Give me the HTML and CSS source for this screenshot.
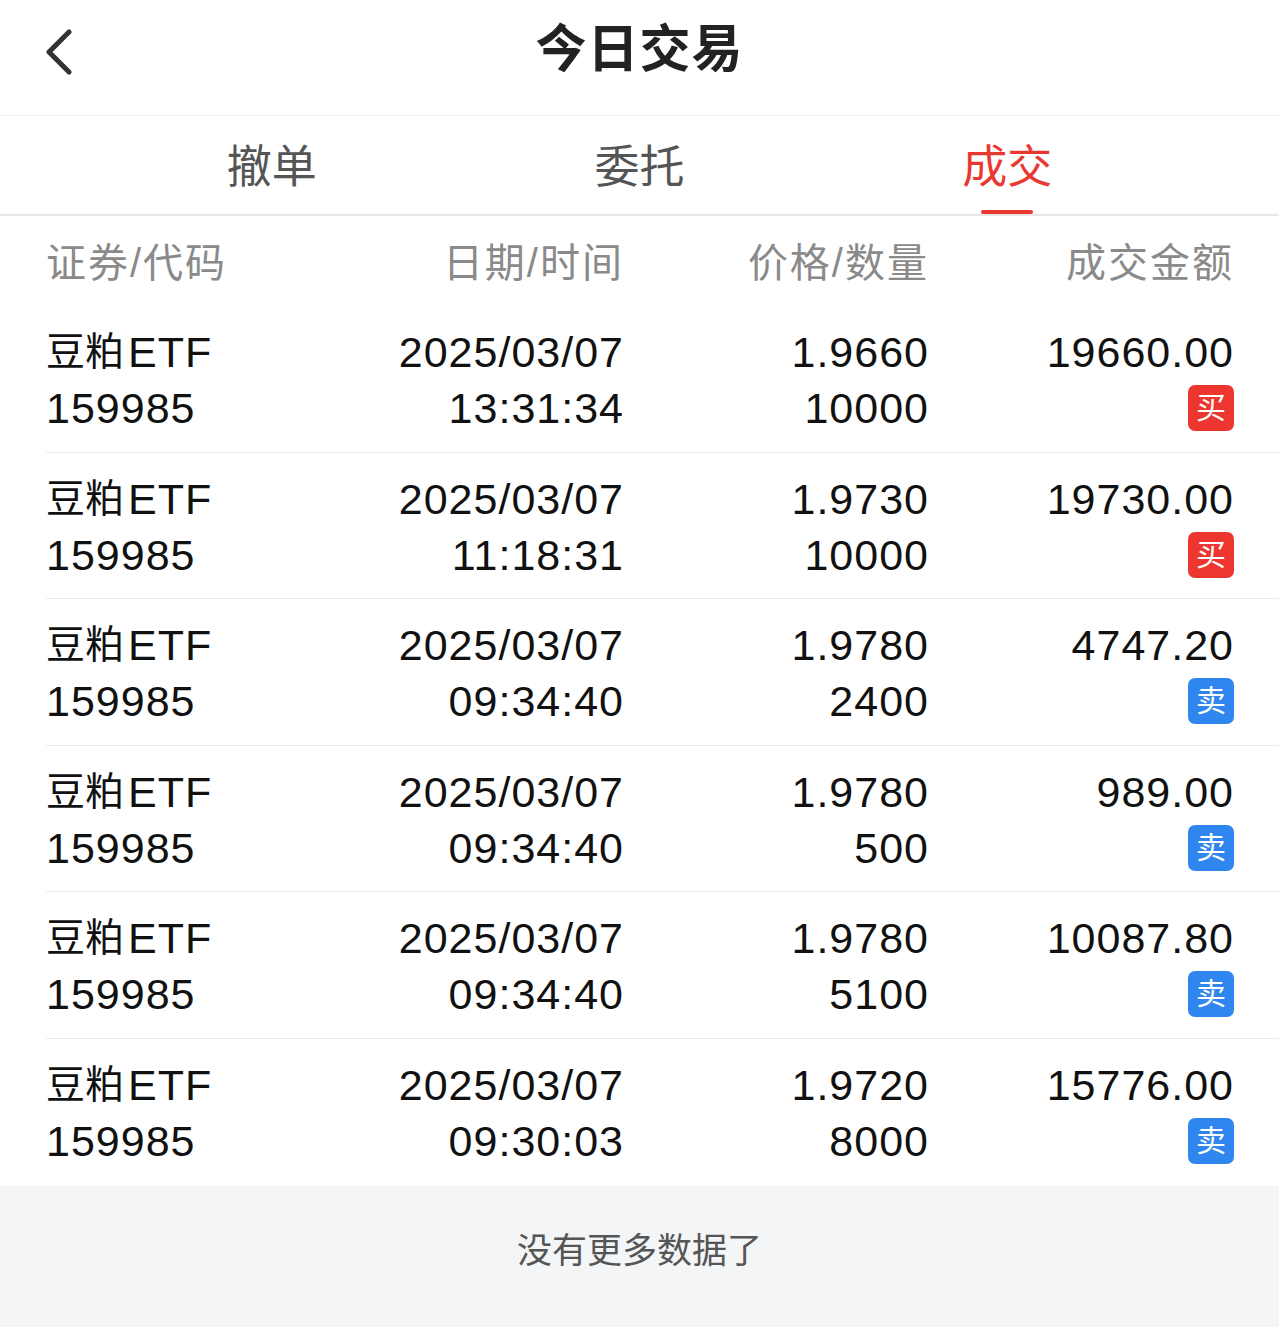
FILE: index.html
```html
<!DOCTYPE html>
<html lang="zh-CN">
<head>
    <meta charset="UTF-8">
    <meta name="viewport" content="width=device-width, initial-scale=1.0">
    <title>今日交易</title>
    <link rel="stylesheet" href="styles.css">
</head>
<body>
    <div class="page">
        <div class="header">
            <span class="back">
                <svg width="34" height="48" viewBox="0 0 34 48">
                    <polyline points="27,5 7,25 27,45" fill="none" stroke="#333" stroke-width="5" stroke-linecap="round" stroke-linejoin="round"/>
                </svg>
            </span>
            <h1 class="title">今日交易</h1>
        </div>

        <div class="tabs">
            <div class="tab">撤单</div>
            <div class="tab">委托</div>
            <div class="tab active">成交</div>
        </div>

        <div class="list">
            <div class="row head">
                <div class="cell left">证券/代码</div>
                <div class="cell">日期/时间</div>
                <div class="cell">价格/数量</div>
                <div class="cell">成交金额</div>
            </div>

            <div class="row">
                <div class="cell left"><span><b class="cn">豆粕</b>ETF</span><span>159985</span></div>
                <div class="cell"><span>2025/03/07</span><span>13:31:34</span></div>
                <div class="cell"><span>1.9660</span><span>10000</span></div>
                <div class="cell"><span>19660.00</span><span><i class="badge buy">买</i></span></div>
            </div>
            <div class="row">
                <div class="cell left"><span><b class="cn">豆粕</b>ETF</span><span>159985</span></div>
                <div class="cell"><span>2025/03/07</span><span>11:18:31</span></div>
                <div class="cell"><span>1.9730</span><span>10000</span></div>
                <div class="cell"><span>19730.00</span><span><i class="badge buy">买</i></span></div>
            </div>
            <div class="row">
                <div class="cell left"><span><b class="cn">豆粕</b>ETF</span><span>159985</span></div>
                <div class="cell"><span>2025/03/07</span><span>09:34:40</span></div>
                <div class="cell"><span>1.9780</span><span>2400</span></div>
                <div class="cell"><span>4747.20</span><span><i class="badge sell">卖</i></span></div>
            </div>
            <div class="row">
                <div class="cell left"><span><b class="cn">豆粕</b>ETF</span><span>159985</span></div>
                <div class="cell"><span>2025/03/07</span><span>09:34:40</span></div>
                <div class="cell"><span>1.9780</span><span>500</span></div>
                <div class="cell"><span>989.00</span><span><i class="badge sell">卖</i></span></div>
            </div>
            <div class="row">
                <div class="cell left"><span><b class="cn">豆粕</b>ETF</span><span>159985</span></div>
                <div class="cell"><span>2025/03/07</span><span>09:34:40</span></div>
                <div class="cell"><span>1.9780</span><span>5100</span></div>
                <div class="cell"><span>10087.80</span><span><i class="badge sell">卖</i></span></div>
            </div>
            <div class="row last">
                <div class="cell left"><span><b class="cn">豆粕</b>ETF</span><span>159985</span></div>
                <div class="cell"><span>2025/03/07</span><span>09:30:03</span></div>
                <div class="cell"><span>1.9720</span><span>8000</span></div>
                <div class="cell"><span>15776.00</span><span><i class="badge sell">卖</i></span></div>
            </div>
        </div>

        <div class="footer">没有更多数据了</div>
    </div>
</body>
</html>
```

FILE: styles.css
```css
body {
    margin: 0;
    font-family: "Liberation Sans", "Noto Sans CJK SC", sans-serif;
    background: #fff;
    color: #111;
}
.page {
    min-height: 1327px;
    display: flex;
    flex-direction: column;
}
.header {
    position: relative;
    height: 115px;
    border-bottom: 1px solid #eeeeee;
    display: flex;
    justify-content: center;
    align-items: flex-start;
}
.back {
    position: absolute;
    left: 42px;
    top: 27px;
    line-height: 0;
}
.title {
    margin: 22px 0 0;
    font-size: 51px;
    line-height: 56px;
    font-weight: 700;
    color: #222;
    letter-spacing: 1px;
}
.tabs {
    display: flex;
    padding: 0 88px;
    border-bottom: 2px solid #e8e8e8;
}
.tab {
    position: relative;
    flex: 1;
    text-align: center;
    font-size: 45px;
    line-height: 56px;
    padding: 24px 0 18px;
    color: #555;
}
.tab.active {
    color: #e8382f;
}
.tab.active::after {
    content: "";
    position: absolute;
    left: 50%;
    bottom: 0;
    width: 52px;
    height: 4px;
    margin-left: -26px;
    background: #e8382f;
    border-radius: 2px;
}
.list {
    padding-left: 46px;
}
.row {
    display: grid;
    grid-template-columns: 262px 316px 305px 305px;
    padding: 18px 0 15.6px 0;
    border-bottom: 1px solid #ebebeb;
    font-size: 43px;
    letter-spacing: 1px;
}
.row.last {
    border-bottom: none;
    padding-bottom: 16.6px;
}
.row.head {
    grid-template-columns: 260px 318px 305px 305px;
    padding: 27px 0 23px 0;
    border-bottom: none;
    font-size: 40px;
    line-height: 40px;
    letter-spacing: 2px;
    color: #8a8a8a;
}
.cell {
    display: flex;
    flex-direction: column;
    align-items: flex-end;
    text-align: right;
}
.cell.left {
    align-items: flex-start;
    text-align: left;
}
.cell span {
    height: 56px;
    line-height: 56px;
    display: flex;
    align-items: center;
}
.cn {
    font-weight: normal;
    font-size: 39px;
    letter-spacing: 0;
    margin-right: 4px;
}
.badge {
    width: 46px;
    height: 46px;
    border-radius: 7px;
    font-style: normal;
    font-size: 30px;
    letter-spacing: 0;
    color: #fff;
    display: flex;
    justify-content: center;
    align-items: center;
}
.badge.buy {
    background: #ee3630;
}
.badge.sell {
    background: #2f86ee;
}
.footer {
    flex: 1;
    background: #f4f5f7;
    text-align: center;
    padding-top: 46px;
    font-size: 35px;
    line-height: 38px;
    color: #555;
}
```
